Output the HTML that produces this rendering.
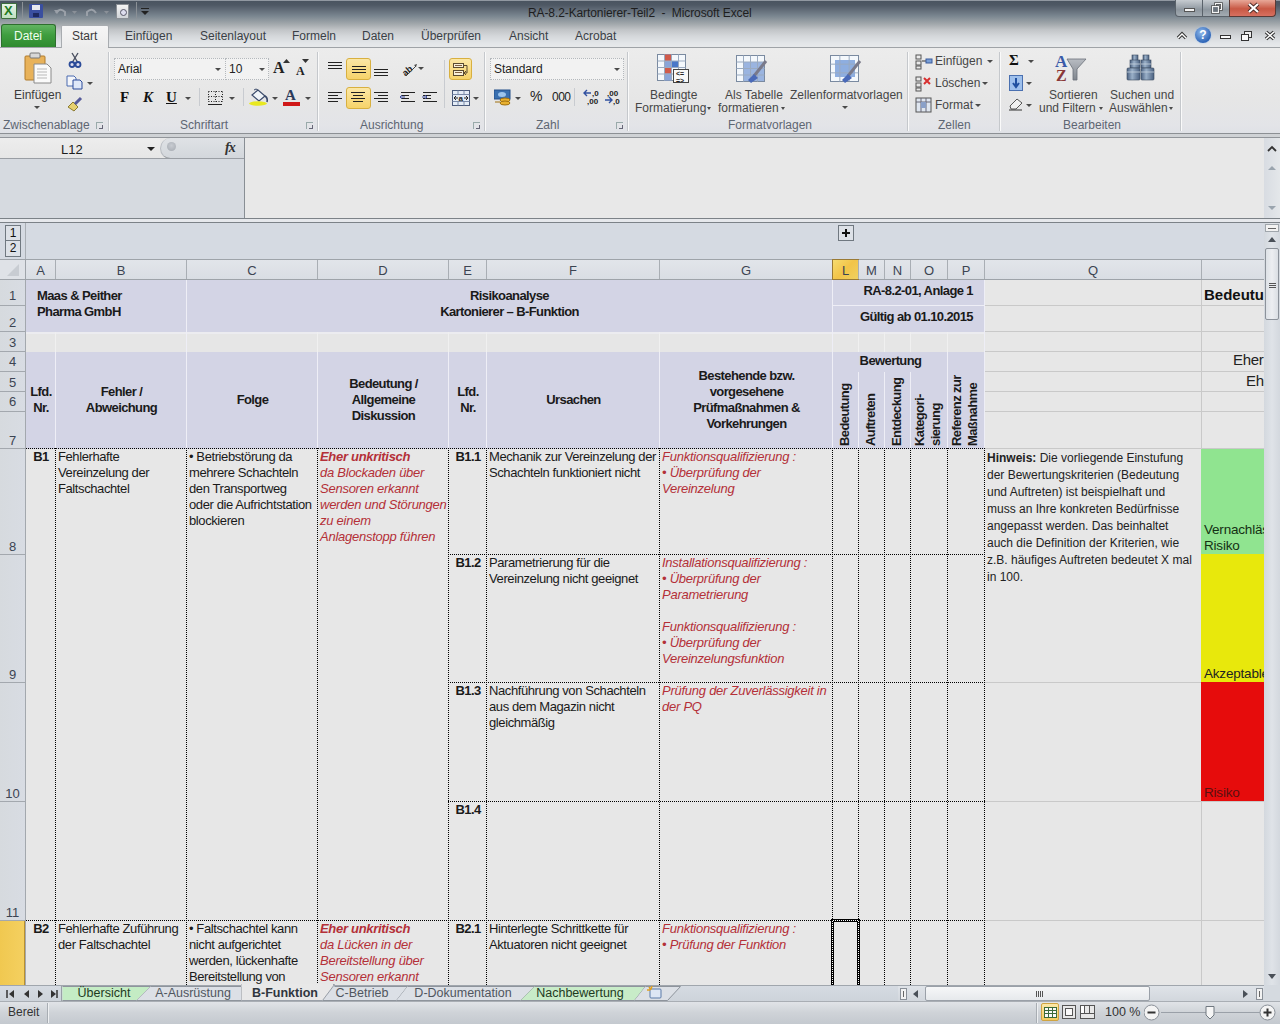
<!DOCTYPE html><html><head><meta charset="utf-8"><style>
*{margin:0;padding:0;box-sizing:border-box}
html,body{width:1280px;height:1024px;overflow:hidden;background:#e8e8e8;font-family:"Liberation Sans",sans-serif}
div{position:absolute}
.t{white-space:nowrap;font-size:12px;line-height:14px;color:#464646}
.ct{font-size:13px;letter-spacing:-0.4px;line-height:16px;color:#1a1a1a;white-space:nowrap}
.b{font-weight:bold}
.red{color:#c0303a;font-style:italic}
.gl{font-size:12px;color:#5f6670}
.sep{width:1px;background:#c4c7cb;box-shadow:1px 0 0 #f8f8f8}
.arr{width:0;height:0;border-left:3px solid transparent;border-right:3px solid transparent;border-top:3px solid #4a4a4a}
</style></head><body>
<div style="left:0px;top:0px;width:1280px;height:48px;background:linear-gradient(to bottom,#d8dce2 0px,#4a5460 1px,#4e5864 5px,#5e6874 9px,#7a8690 16px,#a2a8ac 24px,#c2c5c8 30px,#d4d7da 36px,#e2e5e8 43px,#e6e8ea 46px)"></div>
<div style="left:0px;top:47px;width:1280px;height:1px;background:#9fa3a7"></div>
<div style="left:1px;top:3px;width:16px;height:16px;background:linear-gradient(#e8f4e8,#bfe0bf);border:1px solid #3c6e3c;border-radius:1px"><div style="left:2px;top:0px;font:bold 13px/14px 'Liberation Sans';color:#1f7a1f">X</div></div>
<div style="left:22px;top:2px;width:1px;height:17px;background:#8a9096"></div>
<div style="left:29px;top:4px;width:14px;height:14px;background:#3a4fa0;border-radius:1px"><div style="left:3px;top:1px;width:8px;height:5px;background:#e8eaf0"></div><div style="left:4px;top:9px;width:6px;height:4px;background:#1e2a60"></div></div>
<svg style="position:absolute;left:52px;top:4px" width="90" height="16"><path d="M4 9 q4 -6 9 -1 l0 4" stroke="#9aa0a8" stroke-width="2" fill="none"/><path d="M2 6 l3 4 l3 -4z" fill="#9aa0a8"/><path d="M20 7 l5 0 l-2.5 3z" fill="#8a9098"/><path d="M44 9 q-4 -6 -9 -1 l0 4" stroke="#9aa0a8" stroke-width="2" fill="none"/><path d="M52 7 l5 0 l-2.5 3z" fill="#8a9098"/></svg>
<div style="left:116px;top:4px;width:13px;height:15px;background:linear-gradient(#f4f4f4,#d0d4d8);border:1px solid #8a8f95"><div style="left:3px;top:4px;width:7px;height:7px;border-radius:50%;border:1.5px solid #556;background:#dde"></div></div>
<div style="left:136px;top:2px;width:1px;height:17px;background:#8a9096"></div>
<div style="left:141px;top:8px;width:8px;height:1px;background:#222"></div>
<div style="left:141px;top:11px;width:0;height:0;border-left:4px solid transparent;border-right:4px solid transparent;border-top:4px solid #222"></div>
<div class="t" style="left:528px;top:6px;font-size:12px;color:#1e1e1e;letter-spacing:-0.1px">RA-8.2-Kartonierer-Teil2&nbsp; -&nbsp; Microsoft Excel</div>
<div style="left:1175px;top:0px;width:28px;height:17px;background:linear-gradient(#c6cbd0,#8e979f 60%,#a3abb2);border:1px solid #5a626a;border-top:none;border-radius:0 0 0 4px"><div style="left:8px;top:8px;width:11px;height:4px;background:#f4f4f4;border:1px solid #555"></div></div>
<div style="left:1202px;top:0px;width:28px;height:17px;background:linear-gradient(#c6cbd0,#8e979f 60%,#a3abb2);border:1px solid #5a626a;border-top:none"><svg style="position:absolute;left:8px;top:2px" width="12" height="12"><rect x="4.5" y="1.5" width="6" height="6" fill="none" stroke="#333" stroke-width="2.4"/><rect x="4.5" y="1.5" width="6" height="6" fill="none" stroke="#f4f4f4" stroke-width="1.2"/><rect x="1.5" y="4.5" width="6" height="6" fill="#6a737c" stroke="#333" stroke-width="2.4"/><rect x="1.5" y="4.5" width="6" height="6" fill="#6a737c" stroke="#f4f4f4" stroke-width="1.2"/></svg></div>
<div style="left:1229px;top:0px;width:47px;height:17px;background:linear-gradient(#e8a898,#c85844 55%,#d87060);border:1px solid #5a3a36;border-top:none;border-radius:0 0 4px 0"><svg style="position:absolute;left:17px;top:2px" width="13" height="12"><path d="M2 2 L11 10 M11 2 L2 10" stroke="#4a2a26" stroke-width="4"/><path d="M2 2 L11 10 M11 2 L2 10" stroke="#fff" stroke-width="2.2"/></svg></div>
<div style="left:1px;top:24px;width:55px;height:23px;background:linear-gradient(#62b462,#3f9e3f 45%,#2f8a2f);border:1px solid #2e6e2e;border-bottom:none;border-radius:3px 3px 0 0"></div>
<div class="t" style="left:14px;top:29px;color:#f0fff0;font-size:12px">Datei</div>
<div style="left:61px;top:25px;width:48px;height:23px;background:linear-gradient(#f6f6f6,#ececec);border:1px solid #a8acb0;border-bottom:none;border-radius:2px 2px 0 0"></div>
<div class="t" style="left:72px;top:29px;color:#3b3b3b">Start</div>
<div class="t" style="left:125px;top:29px;color:#3a3f46">Einfügen</div>
<div class="t" style="left:200px;top:29px;color:#3a3f46">Seitenlayout</div>
<div class="t" style="left:292px;top:29px;color:#3a3f46">Formeln</div>
<div class="t" style="left:362px;top:29px;color:#3a3f46">Daten</div>
<div class="t" style="left:421px;top:29px;color:#3a3f46">Überprüfen</div>
<div class="t" style="left:509px;top:29px;color:#3a3f46">Ansicht</div>
<div class="t" style="left:575px;top:29px;color:#3a3f46">Acrobat</div>
<div style="left:108px;top:47px;width:1172px;height:1px;background:#9fa3a7"></div>
<svg style="position:absolute;left:1176px;top:30px" width="12" height="10"><path d="M2 8 L6 4 L10 8" stroke="#333" stroke-width="3.4" fill="none"/><path d="M2 8 L6 4 L10 8" stroke="#fff" stroke-width="1.4" fill="none"/></svg>
<div style="left:1195px;top:27px;width:16px;height:16px;border-radius:50%;background:radial-gradient(circle at 40% 35%,#8fb8ea,#2f66b8 70%);box-shadow:0 0 2px #9cc0f0;color:#fff;font:bold 12px/16px 'Liberation Sans';text-align:center">?</div>
<div style="left:1220px;top:35px;width:11px;height:4px;background:#fafafa;border:1px solid #333"></div>
<div style="left:1244px;top:31px;width:8px;height:7px;border:1px solid #333;background:#eee"></div>
<div style="left:1241px;top:34px;width:8px;height:7px;border:1px solid #333;background:#fafafa"></div>
<svg style="position:absolute;left:1264px;top:30px" width="12" height="11"><path d="M2 2 L10 9 M10 2 L2 9" stroke="#333" stroke-width="3.6"/><path d="M2 2 L10 9 M10 2 L2 9" stroke="#fff" stroke-width="1.6"/></svg>
<div style="left:0px;top:48px;width:1280px;height:86px;background:linear-gradient(#ececec,#e6e6e6 60%,#e3e4e8 90%,#dfe1e6)"></div>
<div style="left:0px;top:133px;width:1280px;height:1px;background:#8c9094"></div>
<div style="left:0px;top:134px;width:1280px;height:3px;background:#cfd2d5"></div>
<div style="left:0px;top:137px;width:1280px;height:1px;background:#91959a"></div>
<div style="left:108px;top:52px;width:1px;height:79px;background:#c5c8cc;box-shadow:1px 0 0 #fafafa"></div>
<div style="left:317px;top:52px;width:1px;height:79px;background:#c5c8cc;box-shadow:1px 0 0 #fafafa"></div>
<div style="left:484px;top:52px;width:1px;height:79px;background:#c5c8cc;box-shadow:1px 0 0 #fafafa"></div>
<div style="left:627px;top:52px;width:1px;height:79px;background:#c5c8cc;box-shadow:1px 0 0 #fafafa"></div>
<div style="left:907px;top:52px;width:1px;height:79px;background:#c5c8cc;box-shadow:1px 0 0 #fafafa"></div>
<div style="left:999px;top:52px;width:1px;height:79px;background:#c5c8cc;box-shadow:1px 0 0 #fafafa"></div>
<div style="left:1180px;top:52px;width:1px;height:79px;background:#c5c8cc;box-shadow:1px 0 0 #fafafa"></div>
<div class="t" style="left:3px;top:118px;color:#5e6672">Zwischenablage</div>
<div class="t" style="left:180px;top:118px;color:#5e6672">Schriftart</div>
<div class="t" style="left:360px;top:118px;color:#5e6672">Ausrichtung</div>
<div class="t" style="left:536px;top:118px;color:#5e6672">Zahl</div>
<div class="t" style="left:728px;top:118px;color:#5e6672">Formatvorlagen</div>
<div class="t" style="left:938px;top:118px;color:#5e6672">Zellen</div>
<div class="t" style="left:1063px;top:118px;color:#5e6672">Bearbeiten</div>
<div style="left:96px;top:122px;width:7px;height:7px;border-left:1px solid #9aa;border-top:1px solid #9aa"><div style="left:2px;top:2px;width:4px;height:4px;border-right:1px solid #667;border-bottom:1px solid #667"></div></div>
<div style="left:306px;top:122px;width:7px;height:7px;border-left:1px solid #9aa;border-top:1px solid #9aa"><div style="left:2px;top:2px;width:4px;height:4px;border-right:1px solid #667;border-bottom:1px solid #667"></div></div>
<div style="left:473px;top:122px;width:7px;height:7px;border-left:1px solid #9aa;border-top:1px solid #9aa"><div style="left:2px;top:2px;width:4px;height:4px;border-right:1px solid #667;border-bottom:1px solid #667"></div></div>
<div style="left:616px;top:122px;width:7px;height:7px;border-left:1px solid #9aa;border-top:1px solid #9aa"><div style="left:2px;top:2px;width:4px;height:4px;border-right:1px solid #667;border-bottom:1px solid #667"></div></div>
<svg style="position:absolute;left:24px;top:52px" width="30" height="32">
<rect x="1" y="4" width="20" height="24" rx="1" fill="#e8b25a" stroke="#b07a2a"/>
<rect x="6" y="1" width="10" height="5" rx="1" fill="#d8d8d8" stroke="#777"/>
<path d="M10 12 h13 l4 4 v15 h-17z" fill="#fafafa" stroke="#8a8a8a"/>
<path d="M13 17 h10 M13 20 h10 M13 23 h10 M13 26 h10" stroke="#b8b8b8"/>
</svg>
<div class="t" style="left:14px;top:88px;color:#3b3b3b">Einfügen</div>
<div class="arr" style="left:34px;top:106px"></div>
<svg style="position:absolute;left:68px;top:52px" width="14" height="16"><path d="M4 1 L9.5 10 M10 1 L4.5 10" stroke="#4a5060" stroke-width="1.4"/><circle cx="4" cy="12.5" r="2.5" fill="#dde" stroke="#2a4a98" stroke-width="1.8"/><circle cx="10" cy="12.5" r="2.5" fill="#dde" stroke="#2a4a98" stroke-width="1.8"/></svg>
<svg style="position:absolute;left:66px;top:75px" width="18" height="15"><path d="M1 1 h7 l2 2 v8 h-9z" fill="#f4f6fa" stroke="#4a6ab0"/><path d="M7 5 h7 l2 2 v7 h-9z" fill="#dfe8f8" stroke="#2a4a9a"/></svg>
<div class="arr" style="left:87px;top:82px"></div>
<svg style="position:absolute;left:66px;top:96px" width="18" height="17"><path d="M2 11 l5 -5 l5 5 l-4 4z" fill="#e6d070" stroke="#8a7a30"/><path d="M9 8 l6 -6" stroke="#555a9a" stroke-width="3"/></svg>
<div style="left:114px;top:58px;width:112px;height:22px;background:#f2f2f2;border:1px dotted #b4b8bc"></div>
<div class="t" style="left:118px;top:62px;color:#222">Arial</div>
<div class="arr" style="left:215px;top:68px"></div>
<div style="left:225px;top:58px;width:44px;height:22px;background:#f2f2f2;border:1px dotted #b4b8bc"></div>
<div class="t" style="left:229px;top:62px;color:#222">10</div>
<div class="arr" style="left:259px;top:68px"></div>
<div class="t" style="left:273px;top:59px;font:bold 16px/18px 'Liberation Serif';color:#222">A</div>
<svg style="position:absolute;left:283px;top:59px" width="8" height="5"><path d="M0 4 L3.5 0 L7 4z" fill="#333"/></svg>
<div class="t" style="left:296px;top:64px;font:bold 12px/14px 'Liberation Serif';color:#222">A</div>
<svg style="position:absolute;left:302px;top:59px" width="8" height="5"><path d="M0 0 L3.5 4 L7 0z" fill="#333"/></svg>
<div class="t" style="left:120px;top:89px;font:bold 15px/16px 'Liberation Serif';color:#111">F</div>
<div class="t" style="left:143px;top:89px;font:bold italic 15px/16px 'Liberation Serif';color:#111">K</div>
<div class="t" style="left:166px;top:89px;font:bold 15px/16px 'Liberation Serif';color:#111;text-decoration:underline">U</div>
<div class="arr" style="left:185px;top:97px"></div>
<div style="left:199px;top:88px;width:1px;height:18px;background:#c8cbd0"></div>
<svg style="position:absolute;left:208px;top:91px" width="15" height="15"><path d="M0.5 0.5 H14.5 M0.5 5.5 H14.5 M0.5 10.5 H14.5 M0.5 0.5 V11 M7.5 0.5 V11 M14.5 0.5 V11" stroke="#222" stroke-dasharray="1 1.5" fill="none"/></svg>
<div style="left:208px;top:104px;width:14px;height:1px;background:#222"></div>
<div class="arr" style="left:229px;top:97px"></div>
<div style="left:243px;top:88px;width:1px;height:18px;background:#c8cbd0"></div>
<svg style="position:absolute;left:248px;top:88px" width="22" height="18"><path d="M4 7 L10 2 L17 8 L11 13z" fill="#f0f4f8" stroke="#3a4a6a" stroke-width="1.2"/><path d="M10 2 q-2 -2 -4 0" stroke="#3a4a6a" fill="none"/><path d="M17 8 q3 2 2 6" stroke="#3a4a6a" stroke-width="1.6" fill="none"/><ellipse cx="10" cy="15.5" rx="9" ry="2.2" fill="#e8e820"/></svg>
<div class="arr" style="left:272px;top:97px"></div>
<div class="t" style="left:285px;top:87px;font:bold 15px/16px 'Liberation Serif';color:#2a3a5a">A</div>
<div style="left:283px;top:102px;width:17px;height:4px;background:#d01818"></div>
<div class="arr" style="left:305px;top:97px"></div>
<div style="left:328px;top:62px;width:14px;height:1px;background:#222"></div>
<div style="left:328px;top:65px;width:14px;height:1px;background:#222"></div>
<div style="left:328px;top:68px;width:14px;height:1px;background:#222"></div>
<div style="left:346px;top:58px;width:25px;height:22px;background:linear-gradient(#fbe7a6,#f6d36a);border:1px solid #d8b040;border-radius:3px"></div>
<div style="left:352px;top:66px;width:14px;height:1px;background:#222"></div>
<div style="left:352px;top:69px;width:14px;height:1px;background:#222"></div>
<div style="left:352px;top:72px;width:14px;height:1px;background:#222"></div>
<div style="left:374px;top:69px;width:14px;height:1px;background:#222"></div>
<div style="left:374px;top:72px;width:14px;height:1px;background:#222"></div>
<div style="left:374px;top:75px;width:14px;height:1px;background:#222"></div>
<svg style="position:absolute;left:400px;top:61px" width="22" height="16"><text x="1" y="12" transform="rotate(-40 8 8)" font-family="Liberation Sans" font-weight="bold" font-size="9" fill="#222">ab</text><path d="M6 15 L16 5" stroke="#444"/><path d="M14 4 l3 -1 l-1 3z" fill="#444"/></svg>
<div class="arr" style="left:418px;top:67px"></div>
<div style="left:328px;top:92px;width:14px;height:1px;background:#222"></div>
<div style="left:328px;top:95px;width:10px;height:1px;background:#222"></div>
<div style="left:328px;top:98px;width:14px;height:1px;background:#222"></div>
<div style="left:328px;top:101px;width:10px;height:1px;background:#222"></div>
<div style="left:346px;top:87px;width:25px;height:22px;background:linear-gradient(#fbe7a6,#f6d36a);border:1px solid #d8b040;border-radius:3px"></div>
<div style="left:351px;top:92px;width:14px;height:1px;background:#222"></div>
<div style="left:353px;top:95px;width:10px;height:1px;background:#222"></div>
<div style="left:351px;top:98px;width:14px;height:1px;background:#222"></div>
<div style="left:353px;top:101px;width:10px;height:1px;background:#222"></div>
<div style="left:374px;top:92px;width:14px;height:1px;background:#222"></div>
<div style="left:378px;top:95px;width:10px;height:1px;background:#222"></div>
<div style="left:374px;top:98px;width:14px;height:1px;background:#222"></div>
<div style="left:378px;top:101px;width:10px;height:1px;background:#222"></div>
<div style="left:401px;top:92px;width:14px;height:1px;background:#222"></div>
<div style="left:401px;top:95px;width:8px;height:1px;background:#222"></div>
<div style="left:401px;top:98px;width:8px;height:1px;background:#222"></div>
<div style="left:401px;top:101px;width:14px;height:1px;background:#222"></div>
<svg style="position:absolute;left:399px;top:93px" width="8" height="8"><path d="M6 4 H1 M3 2 L1 4 L3 6" stroke="#4050a0" fill="none"/></svg>
<div style="left:423px;top:92px;width:14px;height:1px;background:#222"></div>
<div style="left:423px;top:95px;width:8px;height:1px;background:#222"></div>
<div style="left:423px;top:98px;width:8px;height:1px;background:#222"></div>
<div style="left:423px;top:101px;width:14px;height:1px;background:#222"></div>
<svg style="position:absolute;left:421px;top:93px" width="8" height="8"><path d="M1 4 H6 M4 2 L6 4 L4 6" stroke="#4050a0" fill="none"/></svg>
<div style="left:444px;top:60px;width:1px;height:48px;background:#c8cbd0"></div>
<div style="left:449px;top:58px;width:23px;height:22px;background:linear-gradient(#fbe7a6,#f6d36a);border:1px solid #d8b040;border-radius:3px"><svg style="position:absolute;left:2px;top:2px" width="18" height="17"><rect x="1.5" y="2.5" width="10" height="4" fill="#f8f0d8" stroke="#5a4a30"/><rect x="1.5" y="9.5" width="10" height="5" fill="#f8f0d8" stroke="#5a4a30"/><path d="M3 4.5 H10 M3 11.5 H10" stroke="#806040"/><path d="M12 4.5 H15 V12 H13" stroke="#5a4a30" fill="none"/><path d="M14 10 L12 12 L14 14" stroke="#5a4a30" fill="none"/></svg></div>
<svg style="position:absolute;left:452px;top:90px" width="18" height="16"><rect x="0.5" y="0.5" width="17" height="15" fill="#e4ecf6" stroke="#4a5a7a"/><path d="M0.5 4.5 H17.5 M0.5 11.5 H17.5 M6 0.5 V4.5 M12 0.5 V4.5 M6 11.5 V15.5 M12 11.5 V15.5" stroke="#7a8aa8"/><path d="M2 8 H6 M16 8 H12 M4 6 L2 8 L4 10 M14 6 L16 8 L14 10" stroke="#222" fill="none"/><text x="6.5" y="10.5" font-family="Liberation Sans" font-weight="bold" font-size="8" fill="#222">a</text></svg>
<div class="arr" style="left:473px;top:97px"></div>
<div style="left:490px;top:58px;width:134px;height:22px;background:#f2f2f2;border:1px dotted #b4b8bc"></div>
<div class="t" style="left:494px;top:62px;color:#222">Standard</div>
<div class="arr" style="left:614px;top:68px"></div>
<svg style="position:absolute;left:494px;top:89px" width="18" height="18"><rect x="0" y="1" width="16" height="9" fill="#3a70b0" stroke="#24508a"/><ellipse cx="8" cy="5.5" rx="4" ry="2.5" fill="#9cc4ec"/><ellipse cx="11" cy="11" rx="5" ry="2" fill="#e8b030" stroke="#a07010"/><ellipse cx="11" cy="14" rx="5" ry="2" fill="#e8b030" stroke="#a07010"/><path d="M1 13 h5" stroke="#a07010"/></svg>
<div class="arr" style="left:515px;top:97px"></div>
<div class="t" style="left:530px;top:89px;font-size:14px;color:#222">%</div>
<div class="t" style="left:552px;top:90px;font-size:12px;color:#222;letter-spacing:-0.5px">000</div>
<div style="left:574px;top:88px;width:1px;height:18px;background:#c8cbd0"></div>
<svg style="position:absolute;left:582px;top:88px" width="20" height="18"><path d="M9 5 H2 M5 2 L2 5 L5 8" stroke="#3050a0" stroke-width="1.4" fill="none"/><text x="10" y="8" font-family="Liberation Sans" font-size="8" font-weight="bold" fill="#222">,0</text><text x="5" y="16" font-family="Liberation Sans" font-size="8" font-weight="bold" fill="#222">,00</text></svg>
<svg style="position:absolute;left:604px;top:88px" width="20" height="18"><text x="3" y="8" font-family="Liberation Sans" font-size="8" font-weight="bold" fill="#222">,00</text><path d="M1 12 H8 M5 9 L8 12 L5 15" stroke="#3050a0" stroke-width="1.4" fill="none"/><text x="9" y="16" font-family="Liberation Sans" font-size="8" font-weight="bold" fill="#222">,0</text></svg>
<svg style="position:absolute;left:657px;top:54px" width="30" height="28"><rect x="0.5" y="0.5" width="28" height="26" fill="#f4f8fc" stroke="#7a8aa0"/><rect x="7" y="0.5" width="7" height="26" fill="#8aa4d8"/><rect x="7" y="0.5" width="7" height="6.5" fill="#d05a4a"/><rect x="7" y="13" width="7" height="6.5" fill="#d05a4a"/><rect x="14" y="7" width="7" height="6.5" fill="#4a78c8"/><path d="M7.5 0.5 V26.5" stroke="#9aaac0"/><path d="M14.5 0.5 V26.5" stroke="#9aaac0"/><path d="M21.5 0.5 V26.5" stroke="#9aaac0"/><path d="M0.5 7.0 H28.5" stroke="#9aaac0"/><path d="M0.5 13.5 H28.5" stroke="#9aaac0"/><path d="M0.5 20.0 H28.5" stroke="#9aaac0"/></svg>
<div style="left:673px;top:69px;width:16px;height:14px;background:#f8f8f8;border:1px solid #444"><div style="left:2px;top:0px;font:bold 7px/7px 'Liberation Sans';color:#222">&lt;=<br>=&gt;</div></div>
<svg style="position:absolute;left:736px;top:55px" width="30" height="28"><rect x="0.5" y="0.5" width="28" height="26" fill="#f4f8fc" stroke="#7a8aa0"/><rect x="7" y="7" width="21" height="19" fill="#9ab4e0"/><path d="M7.5 0.5 V26.5" stroke="#9aaac0"/><path d="M14.5 0.5 V26.5" stroke="#9aaac0"/><path d="M21.5 0.5 V26.5" stroke="#9aaac0"/><path d="M0.5 7.0 H28.5" stroke="#9aaac0"/><path d="M0.5 13.5 H28.5" stroke="#9aaac0"/><path d="M0.5 20.0 H28.5" stroke="#9aaac0"/></svg>
<svg style="position:absolute;left:746px;top:60px" width="22" height="24"><path d="M20 1 L8 16" stroke="#7a7a8a" stroke-width="3"/><path d="M8 14 l4 4 l-7 5 l-3 -3z" fill="#4a6ab8"/></svg>
<svg style="position:absolute;left:830px;top:55px" width="30" height="28"><rect x="0.5" y="0.5" width="28" height="26" fill="#f4f8fc" stroke="#7a8aa0"/><rect x="5" y="5" width="20" height="17" fill="#8eaee0"/><path d="M9.833333333333334 0.5 V26.5" stroke="#9aaac0"/><path d="M19.166666666666668 0.5 V26.5" stroke="#9aaac0"/><path d="M0.5 9.166666666666666 H28.5" stroke="#9aaac0"/><path d="M0.5 17.833333333333332 H28.5" stroke="#9aaac0"/></svg>
<svg style="position:absolute;left:840px;top:60px" width="22" height="24"><path d="M20 1 L8 16" stroke="#7a7a8a" stroke-width="3"/><path d="M8 14 l4 4 l-7 5 l-3 -3z" fill="#4a6ab8"/></svg>
<div class="t" style="left:650px;top:88px;">Bedingte</div>
<div class="t" style="left:635px;top:101px;">Formatierung</div>
<div class="arr" style="left:707px;top:107px;border-width:3px 2.5px 0"></div>
<div class="t" style="left:725px;top:88px;">Als Tabelle</div>
<div class="t" style="left:718px;top:101px;">formatieren</div>
<div class="arr" style="left:781px;top:107px;border-width:3px 2.5px 0"></div>
<div class="t" style="left:790px;top:88px;">Zellenformatvorlagen</div>
<div class="arr" style="left:842px;top:106px"></div>
<svg style="position:absolute;left:915px;top:54px" width="18" height="60">
<rect x="1" y="1" width="5" height="4" fill="none" stroke="#555"/><rect x="1" y="7" width="5" height="4" fill="none" stroke="#555"/><rect x="1" y="12" width="5" height="3" fill="none" stroke="#555"/>
<path d="M7 7 H11" stroke="#333"/><rect x="11" y="5" width="6" height="4" fill="#7aa0d8" stroke="#3a5a9a"/>
<rect x="1" y="23" width="5" height="4" fill="none" stroke="#555"/><rect x="1" y="29" width="5" height="4" fill="none" stroke="#555"/><rect x="1" y="34" width="5" height="3" fill="none" stroke="#555"/>
<path d="M9 24 L15 30 M15 24 L9 30" stroke="#d83030" stroke-width="2"/>
<rect x="1" y="44" width="15" height="14" fill="#dfe6f0" stroke="#555"/><path d="M1 48 H16 M6 44 V58 M11 44 V58" stroke="#667"/><rect x="6" y="48" width="5" height="6" fill="#8aa0c8"/>
</svg>
<div class="t" style="left:935px;top:54px;">Einfügen</div>
<div class="arr" style="left:987px;top:60px"></div>
<div class="t" style="left:935px;top:76px;">Löschen</div>
<div class="arr" style="left:982px;top:82px"></div>
<div class="t" style="left:935px;top:98px;">Format</div>
<div class="arr" style="left:975px;top:104px"></div>
<div class="t" style="left:1009px;top:52px;font:bold 15px/16px 'Liberation Serif';color:#111">Σ</div>
<div class="arr" style="left:1028px;top:60px"></div>
<svg style="position:absolute;left:1009px;top:75px" width="14" height="16"><rect x="0.5" y="0.5" width="13" height="15" fill="#9ec0ec" stroke="#4a70b0"/><path d="M7 3 V11 M4 8 L7 12 L10 8" stroke="#2050a0" stroke-width="2" fill="none"/></svg>
<div class="arr" style="left:1026px;top:82px"></div>
<svg style="position:absolute;left:1008px;top:97px" width="16" height="14"><path d="M2 9 L9 2 L14 6 L8 12 H3z" fill="#f0f0f0" stroke="#555"/><path d="M1 13 H14" stroke="#333"/></svg>
<div class="arr" style="left:1026px;top:104px"></div>
<svg style="position:absolute;left:1055px;top:52px" width="34" height="32"><defs><linearGradient id="fg" x1="0" x2="0" y1="0" y2="1"><stop offset="0" stop-color="#b8bcc2"/><stop offset="1" stop-color="#80868e"/></linearGradient></defs><path d="M12 7 H31 L22 17 V28 H18 V17z" fill="url(#fg)" stroke="#6a7078" stroke-width="0.8"/><text x="0" y="15" font-family="Liberation Serif" font-weight="bold" font-size="17" fill="#3a5aa8">A</text><text x="1" y="29" font-family="Liberation Serif" font-weight="bold" font-size="16" fill="#8a3838">Z</text></svg>
<div class="t" style="left:1049px;top:88px;">Sortieren</div>
<div class="t" style="left:1039px;top:101px;">und Filtern</div>
<div class="arr" style="left:1099px;top:107px;border-width:3px 2.5px 0"></div>
<svg style="position:absolute;left:1126px;top:54px" width="30" height="28"><defs><linearGradient id="bg1" x1="0" x2="1" y1="0" y2="0"><stop offset="0" stop-color="#4a6080"/><stop offset="0.4" stop-color="#9ab0c8"/><stop offset="1" stop-color="#4a6080"/></linearGradient></defs>
<rect x="6" y="1" width="6" height="6" fill="url(#bg1)" stroke="#3a4a60" stroke-width="0.6"/><rect x="17" y="1" width="6" height="6" fill="url(#bg1)" stroke="#3a4a60" stroke-width="0.6"/>
<rect x="4" y="6" width="10" height="8" fill="url(#bg1)" stroke="#3a4a60" stroke-width="0.6"/><rect x="15" y="6" width="10" height="8" fill="url(#bg1)" stroke="#3a4a60" stroke-width="0.6"/>
<rect x="1" y="14" width="13" height="12" rx="1" fill="url(#bg1)" stroke="#3a4a60" stroke-width="0.6"/><rect x="15" y="14" width="13" height="12" rx="1" fill="url(#bg1)" stroke="#3a4a60" stroke-width="0.6"/>
<path d="M1 18 H14 M15 18 H28 M4 10 H14 M15 10 H25" stroke="#c8d4e0" stroke-width="0.8"/></svg>
<div class="t" style="left:1110px;top:88px;">Suchen und</div>
<div class="t" style="left:1109px;top:101px;">Auswählen</div>
<div class="arr" style="left:1169px;top:107px;border-width:3px 2.5px 0"></div>
<div style="left:0px;top:138px;width:1264px;height:80px;background:#e8e8e8"></div>
<div style="left:0px;top:138px;width:160px;height:21px;background:linear-gradient(#ededed,#e6e6e6);border-bottom:1px solid #a0a4a8"></div>
<div class="t" style="left:61px;top:142px;font-size:13px;line-height:15px;color:#1e1e1e">L12</div>
<div style="left:147px;top:147px;width:0;height:0;border-left:4px solid transparent;border-right:4px solid transparent;border-top:4px solid #222"></div>
<div style="left:160px;top:138px;width:85px;height:21px;background:linear-gradient(#dfe2e6,#d3d7dc);border-radius:11px 0 0 11px;border-left:1px solid #b8bcc2;border-bottom:1px solid #a0a4a8"><div style="left:6px;top:4px;width:9px;height:9px;border-radius:50%;background:radial-gradient(circle at 50% 40%,#c8ccd2,#a4a9b0)"></div></div>
<div style="left:0px;top:158px;width:245px;height:1px;background:#9a9ea4"></div>
<div class="t" style="left:225px;top:140px;font:bold italic 14px/16px 'Liberation Serif';color:#333;letter-spacing:-1px">fx</div>
<div style="left:0px;top:159px;width:245px;height:59px;background:#d6dae0"></div>
<div style="left:244px;top:138px;width:1px;height:80px;background:#888e94"></div>
<div style="left:0px;top:218px;width:1280px;height:1px;background:#7c8288"></div>
<div style="left:0px;top:219px;width:1280px;height:3px;background:#e6e8ec"></div>
<div style="left:0px;top:222px;width:1280px;height:1px;background:#7c8288"></div>
<div style="left:1264px;top:138px;width:16px;height:80px;background:linear-gradient(90deg,#d8dce2,#e4e7ea)"></div>
<svg style="position:absolute;left:1266px;top:142px" width="12" height="76"><path d="M2 9 L6 5 L10 9" stroke="#333" stroke-width="1.8" fill="none"/><path d="M2 28 L6 24 L10 28z" fill="#9aa4ae"/><path d="M2 64 L6 68 L10 64z" fill="#9aa4ae"/></svg>
<div style="left:0px;top:223px;width:1264px;height:37px;background:#d5dae2"></div>
<div style="left:25px;top:223px;width:1px;height:37px;background:#a9aeb4"></div>
<div style="left:5px;top:225px;width:16px;height:16px;border:1px solid #707880;background:#dde1e7;font-size:12px;line-height:14px;text-align:center;color:#111">1</div>
<div style="left:5px;top:240px;width:16px;height:17px;border:1px solid #707880;background:#dde1e7;font-size:12px;line-height:15px;text-align:center;color:#111">2</div>
<div style="left:838px;top:225px;width:16px;height:16px;border:1px solid #707880;background:#dde1e7"><div style="left:3px;top:6px;width:8px;height:2px;background:#111"></div><div style="left:6px;top:3px;width:2px;height:8px;background:#111"></div></div>
<div style="left:0px;top:259px;width:1264px;height:1px;background:#9ea3a9"></div>
<div style="left:0px;top:260px;width:1264px;height:20px;background:linear-gradient(#e2e5ea,#d9dde3)"></div>
<div style="left:0px;top:279px;width:1264px;height:1px;background:#9ea3a9"></div>
<div style="left:0px;top:260px;width:25px;height:19px;background:#dfe2e7"><svg style="position:absolute;left:5px;top:3px" width="15" height="14"><path d="M14 1 L14 13 L2 13z" fill="#c8ccd2"/></svg></div>
<div style="left:25px;top:260px;width:1px;height:20px;background:#9ea3a9"></div>
<div style="left:55px;top:260px;width:1px;height:19px;background:#a9aeb4"></div>
<div class="t" style="left:26px;top:263px;width:29px;text-align:center;font-size:13px;line-height:15px;color:#3c4452">A</div>
<div style="left:186px;top:260px;width:1px;height:19px;background:#a9aeb4"></div>
<div class="t" style="left:56px;top:263px;width:130px;text-align:center;font-size:13px;line-height:15px;color:#3c4452">B</div>
<div style="left:317px;top:260px;width:1px;height:19px;background:#a9aeb4"></div>
<div class="t" style="left:187px;top:263px;width:130px;text-align:center;font-size:13px;line-height:15px;color:#3c4452">C</div>
<div style="left:448px;top:260px;width:1px;height:19px;background:#a9aeb4"></div>
<div class="t" style="left:318px;top:263px;width:130px;text-align:center;font-size:13px;line-height:15px;color:#3c4452">D</div>
<div style="left:486px;top:260px;width:1px;height:19px;background:#a9aeb4"></div>
<div class="t" style="left:449px;top:263px;width:37px;text-align:center;font-size:13px;line-height:15px;color:#3c4452">E</div>
<div style="left:659px;top:260px;width:1px;height:19px;background:#a9aeb4"></div>
<div class="t" style="left:487px;top:263px;width:172px;text-align:center;font-size:13px;line-height:15px;color:#3c4452">F</div>
<div style="left:832px;top:260px;width:1px;height:19px;background:#a9aeb4"></div>
<div class="t" style="left:660px;top:263px;width:172px;text-align:center;font-size:13px;line-height:15px;color:#3c4452">G</div>
<div style="left:832px;top:259px;width:27px;height:21px;background:linear-gradient(135deg,#f6dc70,#f2c448 50%,#f0d060);border:1px solid #9a7a34"></div>
<div style="left:858px;top:260px;width:1px;height:19px;background:#a9aeb4"></div>
<div class="t" style="left:833px;top:263px;width:25px;text-align:center;font-size:13px;line-height:15px;color:#3c4452">L</div>
<div style="left:884px;top:260px;width:1px;height:19px;background:#a9aeb4"></div>
<div class="t" style="left:859px;top:263px;width:25px;text-align:center;font-size:13px;line-height:15px;color:#3c4452">M</div>
<div style="left:910px;top:260px;width:1px;height:19px;background:#a9aeb4"></div>
<div class="t" style="left:885px;top:263px;width:25px;text-align:center;font-size:13px;line-height:15px;color:#3c4452">N</div>
<div style="left:947px;top:260px;width:1px;height:19px;background:#a9aeb4"></div>
<div class="t" style="left:911px;top:263px;width:36px;text-align:center;font-size:13px;line-height:15px;color:#3c4452">O</div>
<div style="left:984px;top:260px;width:1px;height:19px;background:#a9aeb4"></div>
<div class="t" style="left:948px;top:263px;width:36px;text-align:center;font-size:13px;line-height:15px;color:#3c4452">P</div>
<div style="left:1201px;top:260px;width:1px;height:19px;background:#a9aeb4"></div>
<div class="t" style="left:985px;top:263px;width:216px;text-align:center;font-size:13px;line-height:15px;color:#3c4452">Q</div>
<div style="left:1264px;top:260px;width:1px;height:19px;background:#a9aeb4"></div>
<div style="left:0px;top:280px;width:25px;height:705px;background:linear-gradient(90deg,#d6dade,#d8dce3)"></div>
<div style="left:25px;top:280px;width:1px;height:705px;background:#a3a8ae"></div>
<div style="left:0px;top:305px;width:25px;height:1px;background:#a3a8ae"></div>
<div class="t" style="left:0px;top:288px;width:25px;text-align:center;font-size:13px;line-height:15px;color:#3c4452">1</div>
<div style="left:0px;top:331px;width:25px;height:1px;background:#a3a8ae"></div>
<div class="t" style="left:0px;top:315px;width:25px;text-align:center;font-size:13px;line-height:15px;color:#3c4452">2</div>
<div style="left:0px;top:351px;width:25px;height:1px;background:#a3a8ae"></div>
<div class="t" style="left:0px;top:335px;width:25px;text-align:center;font-size:13px;line-height:15px;color:#3c4452">3</div>
<div style="left:0px;top:371px;width:25px;height:1px;background:#a3a8ae"></div>
<div class="t" style="left:0px;top:354px;width:25px;text-align:center;font-size:13px;line-height:15px;color:#3c4452">4</div>
<div style="left:0px;top:391px;width:25px;height:1px;background:#a3a8ae"></div>
<div class="t" style="left:0px;top:375px;width:25px;text-align:center;font-size:13px;line-height:15px;color:#3c4452">5</div>
<div style="left:0px;top:411px;width:25px;height:1px;background:#a3a8ae"></div>
<div class="t" style="left:0px;top:394px;width:25px;text-align:center;font-size:13px;line-height:15px;color:#3c4452">6</div>
<div style="left:0px;top:448px;width:25px;height:1px;background:#a3a8ae"></div>
<div class="t" style="left:0px;top:433px;width:25px;text-align:center;font-size:13px;line-height:15px;color:#3c4452">7</div>
<div style="left:0px;top:554px;width:25px;height:1px;background:#a3a8ae"></div>
<div class="t" style="left:0px;top:539px;width:25px;text-align:center;font-size:13px;line-height:15px;color:#3c4452">8</div>
<div style="left:0px;top:682px;width:25px;height:1px;background:#a3a8ae"></div>
<div class="t" style="left:0px;top:667px;width:25px;text-align:center;font-size:13px;line-height:15px;color:#3c4452">9</div>
<div style="left:0px;top:801px;width:25px;height:1px;background:#a3a8ae"></div>
<div class="t" style="left:0px;top:786px;width:25px;text-align:center;font-size:13px;line-height:15px;color:#3c4452">10</div>
<div style="left:0px;top:920px;width:25px;height:1px;background:#a3a8ae"></div>
<div class="t" style="left:0px;top:905px;width:25px;text-align:center;font-size:13px;line-height:15px;color:#3c4452">11</div>
<div style="left:0px;top:921px;width:25px;height:64px;background:linear-gradient(90deg,#f0c850,#f4d060);border-right:1px solid #b89030"></div>
<div style="left:26px;top:280px;width:1238px;height:705px;overflow:hidden;background:#e7e7e7">
<div style="left:959px;top:25px;width:279px;height:1px;background:#c9c9c9"></div>
<div style="left:959px;top:51px;width:279px;height:1px;background:#c9c9c9"></div>
<div style="left:959px;top:71px;width:279px;height:1px;background:#c9c9c9"></div>
<div style="left:959px;top:91px;width:279px;height:1px;background:#c9c9c9"></div>
<div style="left:959px;top:111px;width:279px;height:1px;background:#c9c9c9"></div>
<div style="left:959px;top:131px;width:279px;height:1px;background:#c9c9c9"></div>
<div style="left:959px;top:168px;width:279px;height:1px;background:#c9c9c9"></div>
<div style="left:959px;top:402px;width:279px;height:1px;background:#c9c9c9"></div>
<div style="left:959px;top:521px;width:279px;height:1px;background:#c9c9c9"></div>
<div style="left:959px;top:640px;width:279px;height:1px;background:#c9c9c9"></div>
<div style="left:1175px;top:0px;width:1px;height:705px;background:#c9c9c9"></div>
<div style="left:0px;top:0px;width:959px;height:52px;background:#d3d4e5"></div>
<div style="left:0px;top:52px;width:959px;height:20px;background:#e6e6e6;border-top:2px solid #ececf0"></div>
<div style="left:0px;top:72px;width:959px;height:97px;background:#d3d4e5"></div>
<div style="left:160px;top:0px;width:1px;height:168px;background:#eeeef6"></div>
<div style="left:806px;top:0px;width:1px;height:168px;background:#eeeef6"></div>
<div style="left:958px;top:0px;width:1px;height:168px;background:#eeeef6"></div>
<div style="left:29px;top:52px;width:1px;height:20px;background:#f0f0f0"></div>
<div style="left:291px;top:52px;width:1px;height:20px;background:#f0f0f0"></div>
<div style="left:422px;top:52px;width:1px;height:20px;background:#f0f0f0"></div>
<div style="left:460px;top:52px;width:1px;height:20px;background:#f0f0f0"></div>
<div style="left:633px;top:52px;width:1px;height:20px;background:#f0f0f0"></div>
<div style="left:832px;top:52px;width:1px;height:20px;background:#f0f0f0"></div>
<div style="left:858px;top:52px;width:1px;height:20px;background:#f0f0f0"></div>
<div style="left:884px;top:52px;width:1px;height:20px;background:#f0f0f0"></div>
<div style="left:921px;top:52px;width:1px;height:20px;background:#f0f0f0"></div>
<div style="left:29px;top:72px;width:1px;height:96px;background:#eeeef6"></div>
<div style="left:291px;top:72px;width:1px;height:96px;background:#eeeef6"></div>
<div style="left:422px;top:72px;width:1px;height:96px;background:#eeeef6"></div>
<div style="left:460px;top:72px;width:1px;height:96px;background:#eeeef6"></div>
<div style="left:633px;top:72px;width:1px;height:96px;background:#eeeef6"></div>
<div style="left:921px;top:72px;width:1px;height:96px;background:#eeeef6"></div>
<div style="left:832px;top:92px;width:1px;height:76px;background:#eeeef6"></div>
<div style="left:858px;top:92px;width:1px;height:76px;background:#eeeef6"></div>
<div style="left:884px;top:92px;width:1px;height:76px;background:#eeeef6"></div>
<div style="left:807px;top:25px;width:151px;height:1px;background:#eeeef6"></div>
<div class="ct" style="left:11px;top:8px;font-weight:bold;letter-spacing:-0.6px;color:#1a1a1a">Maas &amp; Peither<br>Pharma GmbH</div>
<div class="ct" style="left:161px;top:8px;font-weight:bold;letter-spacing:-0.6px;color:#1a1a1a;width:645px;text-align:center">Risikoanalyse<br>Kartonierer – B-Funktion</div>
<div class="ct" style="left:807px;top:3px;font-weight:bold;letter-spacing:-0.6px;color:#1a1a1a;width:140px;text-align:right">RA-8.2-01, Anlage 1</div>
<div class="ct" style="left:807px;top:29px;font-weight:bold;letter-spacing:-0.6px;color:#1a1a1a;width:140px;text-align:right">Gültig ab 01.10.2015</div>
<div class="ct" style="left:0px;top:104px;font-weight:bold;letter-spacing:-0.6px;color:#1a1a1a;width:30px;text-align:center">Lfd.<br>Nr.</div>
<div class="ct" style="left:30px;top:104px;font-weight:bold;letter-spacing:-0.6px;color:#1a1a1a;width:131px;text-align:center">Fehler /<br>Abweichung</div>
<div class="ct" style="left:161px;top:112px;font-weight:bold;letter-spacing:-0.6px;color:#1a1a1a;width:131px;text-align:center">Folge</div>
<div class="ct" style="left:292px;top:96px;font-weight:bold;letter-spacing:-0.6px;color:#1a1a1a;width:131px;text-align:center">Bedeutung /<br>Allgemeine<br>Diskussion</div>
<div class="ct" style="left:423px;top:104px;font-weight:bold;letter-spacing:-0.6px;color:#1a1a1a;width:38px;text-align:center">Lfd.<br>Nr.</div>
<div class="ct" style="left:461px;top:112px;font-weight:bold;letter-spacing:-0.6px;color:#1a1a1a;width:173px;text-align:center">Ursachen</div>
<div class="ct" style="left:634px;top:88px;font-weight:bold;letter-spacing:-0.6px;color:#1a1a1a;width:173px;text-align:center">Bestehende bzw.<br>vorgesehene<br>Prüfmaßnahmen &amp;<br>Vorkehrungen</div>
<div class="ct" style="left:807px;top:73px;font-weight:bold;letter-spacing:-0.6px;color:#1a1a1a;width:115px;text-align:center">Bewertung</div>
<div class="ct" style="left:811px;top:166px;transform:rotate(-90deg);transform-origin:0 0;font-weight:bold;letter-spacing:-0.6px;color:#1a1a1a">Bedeutung</div>
<div class="ct" style="left:837px;top:166px;transform:rotate(-90deg);transform-origin:0 0;font-weight:bold;letter-spacing:-0.6px;color:#1a1a1a">Auftreten</div>
<div class="ct" style="left:863px;top:166px;transform:rotate(-90deg);transform-origin:0 0;font-weight:bold;letter-spacing:-0.6px;color:#1a1a1a">Entdeckung</div>
<div class="ct" style="left:886px;top:166px;transform:rotate(-90deg);transform-origin:0 0;font-weight:bold;letter-spacing:-0.6px;color:#1a1a1a">Kategori-<br>sierung</div>
<div class="ct" style="left:923px;top:166px;transform:rotate(-90deg);transform-origin:0 0;font-weight:bold;letter-spacing:-0.6px;color:#1a1a1a">Referenz zur<br>Maßnahme</div>
<div class="ct" style="left:1178px;top:6px;font-size:15px;line-height:17px;font-weight:bold;letter-spacing:0;color:#111">Bedeutung</div>
<div class="ct" style="left:1207px;top:71px;font-size:15px;line-height:17px;letter-spacing:-0.3px;color:#222">Eher unkritisch</div>
<div class="ct" style="left:1220px;top:92px;font-size:15px;line-height:17px;letter-spacing:-0.3px;color:#222">Eher unkritisch</div>
<div style="left:0px;top:169px;width:959px;height:536px;background:#e7e7e7"></div>
<div style="left:1175px;top:169px;width:63px;height:106px;background:#90e490"></div>
<div style="left:1175px;top:274px;width:63px;height:128px;background:#e8e80c"></div>
<div style="left:1175px;top:402px;width:63px;height:119px;background:#e60c0c"></div>
<div class="ct" style="left:1178px;top:242px;font-size:13.5px;line-height:16px;letter-spacing:-0.2px;color:#143014">Vernachlässigbares<br>Risiko</div>
<div class="ct" style="left:1178px;top:386px;font-size:13.5px;line-height:16px;letter-spacing:-0.2px;color:#222">Akzeptables</div>
<div class="ct" style="left:1178px;top:505px;font-size:13.5px;line-height:16px;letter-spacing:-0.2px;color:#5a1010">Risiko</div>
<div style="left:0px;top:168px;width:959px;height:1px;background-image:linear-gradient(90deg,#000 50%,transparent 50%);background-size:2px 1px"></div>
<div style="left:0px;top:640px;width:959px;height:1px;background-image:linear-gradient(90deg,#000 50%,transparent 50%);background-size:2px 1px"></div>
<div style="left:422px;top:274px;width:537px;height:1px;background-image:linear-gradient(90deg,#000 50%,transparent 50%);background-size:2px 1px"></div>
<div style="left:422px;top:402px;width:537px;height:1px;background-image:linear-gradient(90deg,#000 50%,transparent 50%);background-size:2px 1px"></div>
<div style="left:422px;top:521px;width:537px;height:1px;background-image:linear-gradient(90deg,#000 50%,transparent 50%);background-size:2px 1px"></div>
<div style="left:29px;top:168px;width:1px;height:538px;background-image:linear-gradient(180deg,#000 50%,transparent 50%);background-size:1px 2px"></div>
<div style="left:160px;top:168px;width:1px;height:538px;background-image:linear-gradient(180deg,#000 50%,transparent 50%);background-size:1px 2px"></div>
<div style="left:291px;top:168px;width:1px;height:538px;background-image:linear-gradient(180deg,#000 50%,transparent 50%);background-size:1px 2px"></div>
<div style="left:422px;top:168px;width:1px;height:538px;background-image:linear-gradient(180deg,#000 50%,transparent 50%);background-size:1px 2px"></div>
<div style="left:460px;top:168px;width:1px;height:538px;background-image:linear-gradient(180deg,#000 50%,transparent 50%);background-size:1px 2px"></div>
<div style="left:633px;top:168px;width:1px;height:538px;background-image:linear-gradient(180deg,#000 50%,transparent 50%);background-size:1px 2px"></div>
<div style="left:806px;top:168px;width:1px;height:538px;background-image:linear-gradient(180deg,#000 50%,transparent 50%);background-size:1px 2px"></div>
<div style="left:832px;top:168px;width:1px;height:538px;background-image:linear-gradient(180deg,#000 50%,transparent 50%);background-size:1px 2px"></div>
<div style="left:858px;top:168px;width:1px;height:538px;background-image:linear-gradient(180deg,#000 50%,transparent 50%);background-size:1px 2px"></div>
<div style="left:884px;top:168px;width:1px;height:538px;background-image:linear-gradient(180deg,#000 50%,transparent 50%);background-size:1px 2px"></div>
<div style="left:921px;top:168px;width:1px;height:538px;background-image:linear-gradient(180deg,#000 50%,transparent 50%);background-size:1px 2px"></div>
<div style="left:958px;top:168px;width:1px;height:538px;background-image:linear-gradient(180deg,#000 50%,transparent 50%);background-size:1px 2px"></div>
<div class="ct" style="left:0px;top:169px;font-weight:bold;letter-spacing:-0.6px;color:#1a1a1a;width:30px;text-align:center">B1</div>
<div class="ct" style="left:32px;top:169px;color:#1a1a1a">Fehlerhafte<br>Vereinzelung der<br>Faltschachtel</div>
<div class="ct" style="left:163px;top:169px;color:#1a1a1a">• Betriebstörung da<br>mehrere Schachteln<br>den Transportweg<br>oder die Aufrichtstation<br>blockieren</div>
<div class="ct" style="left:294px;top:169px;color:#b43038;font-style:italic;letter-spacing:-0.25px"><b style='letter-spacing:-0.3px'>Eher unkritisch</b><br>da Blockaden über<br>Sensoren erkannt<br>werden und Störungen<br>zu einem<br>Anlagenstopp führen</div>
<div class="ct" style="left:423px;top:169px;font-weight:bold;letter-spacing:-0.6px;color:#1a1a1a;width:38px;text-align:center">B1.1</div>
<div class="ct" style="left:423px;top:275px;font-weight:bold;letter-spacing:-0.6px;color:#1a1a1a;width:38px;text-align:center">B1.2</div>
<div class="ct" style="left:423px;top:403px;font-weight:bold;letter-spacing:-0.6px;color:#1a1a1a;width:38px;text-align:center">B1.3</div>
<div class="ct" style="left:423px;top:522px;font-weight:bold;letter-spacing:-0.6px;color:#1a1a1a;width:38px;text-align:center">B1.4</div>
<div class="ct" style="left:423px;top:641px;font-weight:bold;letter-spacing:-0.6px;color:#1a1a1a;width:38px;text-align:center">B2.1</div>
<div class="ct" style="left:463px;top:169px;color:#1a1a1a">Mechanik zur Vereinzelung der<br>Schachteln funktioniert nicht</div>
<div class="ct" style="left:463px;top:275px;color:#1a1a1a">Parametrierung für die<br>Vereinzelung nicht geeignet</div>
<div class="ct" style="left:463px;top:403px;color:#1a1a1a">Nachführung von Schachteln<br>aus dem Magazin nicht<br>gleichmäßig</div>
<div class="ct" style="left:463px;top:641px;color:#1a1a1a">Hinterlegte Schrittkette für<br>Aktuatoren nicht geeignet</div>
<div class="ct" style="left:636px;top:169px;color:#b43038;font-style:italic;letter-spacing:-0.25px">Funktionsqualifizierung :<br>• Überprüfung der<br>Vereinzelung</div>
<div class="ct" style="left:636px;top:275px;color:#b43038;font-style:italic;letter-spacing:-0.25px">Installationsqualifizierung :<br>• Überprüfung der<br>Parametrierung<br><br>Funktionsqualifizierung :<br>• Überprüfung der<br>Vereinzelungsfunktion</div>
<div class="ct" style="left:636px;top:403px;color:#b43038;font-style:italic;letter-spacing:-0.25px">Prüfung der Zuverlässigkeit in<br>der PQ</div>
<div class="ct" style="left:636px;top:641px;color:#b43038;font-style:italic;letter-spacing:-0.25px">Funktionsqualifizierung :<br>• Prüfung der Funktion</div>
<div class="ct" style="left:0px;top:641px;font-weight:bold;letter-spacing:-0.6px;color:#1a1a1a;width:30px;text-align:center">B2</div>
<div class="ct" style="left:32px;top:641px;color:#1a1a1a">Fehlerhafte Zuführung<br>der Faltschachtel</div>
<div class="ct" style="left:163px;top:641px;color:#1a1a1a">• Faltschachtel kann<br>nicht aufgerichtet<br>werden, lückenhafte<br>Bereitstellung von</div>
<div class="ct" style="left:294px;top:641px;color:#b43038;font-style:italic;letter-spacing:-0.25px"><b style='letter-spacing:-0.3px'>Eher unkritisch</b><br>da Lücken in der<br>Bereitstellung über<br>Sensoren erkannt</div>
<div class="ct" style="left:961px;top:170px;font-size:12px;line-height:17px;letter-spacing:0;color:#222"><b>Hinweis:</b> Die vorliegende Einstufung<br>der Bewertungskriterien (Bedeutung<br>und Auftreten) ist beispielhaft und<br>muss an Ihre konkreten Bedürfnisse<br>angepasst werden. Das beinhaltet<br>auch die Definition der Kriterien, wie<br>z.B. häufiges Auftreten bedeutet X mal<br>in 100.</div>
<div style="left:805px;top:639px;width:29px;height:80px;border:3px solid #000"></div>
<div style="left:806px;top:641px;width:1px;height:70px;background-image:linear-gradient(180deg,#fff 50%,transparent 50%);background-size:1px 2px"></div>
<div style="left:832px;top:641px;width:1px;height:70px;background-image:linear-gradient(180deg,#fff 50%,transparent 50%);background-size:1px 2px"></div>
<div style="left:807px;top:640px;width:25px;height:1px;background-image:linear-gradient(90deg,#fff 50%,transparent 50%);background-size:2px 1px"></div>
</div>
<div style="left:1264px;top:223px;width:16px;height:762px;background:linear-gradient(90deg,#d3d8de,#dfe3e8 50%,#d3d8de)"></div>
<div style="left:1265px;top:224px;width:14px;height:8px;background:#f2f2f2;border:1px solid #a0a6ac"><div style="left:2px;top:3px;width:8px;height:1px;background:#666"></div></div>
<svg style="position:absolute;left:1266px;top:234px" width="12" height="10"><path d="M2 8 L6 3 L10 8z" fill="#4a5058"/></svg>
<div style="left:1265px;top:248px;width:14px;height:72px;background:linear-gradient(90deg,#dde1e6,#eceef1 50%,#dadee3);border:1px solid #8c929a;border-radius:2px"><div style="left:3px;top:34px;width:7px;height:1px;background:#555;box-shadow:0 2px 0 #555,0 4px 0 #555"></div></div>
<svg style="position:absolute;left:1266px;top:972px" width="12" height="10"><path d="M2 2 L6 7 L10 2z" fill="#4a5058"/></svg>
<div style="left:0px;top:985px;width:1280px;height:16px;background:linear-gradient(#d6dbe2,#cdd3da)"></div>
<div style="left:0px;top:985px;width:1280px;height:1px;background:#a0a6ad"></div>
<svg style="position:absolute;left:4px;top:988px" width="56" height="12">
<path d="M3 2 V10" stroke="#333" stroke-width="1.5"/><path d="M10 2 L5 6 L10 10z" fill="#333"/>
<path d="M25 2 L20 6 L25 10z" fill="#333"/>
<path d="M34 2 L39 6 L34 10z" fill="#333"/>
<path d="M47 2 L52 6 L47 10z" fill="#333"/><path d="M53 2 V10" stroke="#333" stroke-width="1.5"/>
</svg>
<div style="left:61px;top:986px;width:1px;height:15px;background:#9aa0a8"></div>
<svg style="position:absolute;left:62px;top:986px" width="90" height="16"><path d="M0.5 0.5 L88.5 0.5 L74.5 14.5 L0.5 14.5" fill="#c4ecc4" stroke="#8e949c"/></svg>
<div class="t" style="left:62px;top:986px;width:84px;text-align:center;font-size:12.5px;line-height:15px;font-weight:normal;color:#1e3a1e">Übersicht</div>
<svg style="position:absolute;left:136px;top:986px" width="107" height="16"><path d="M14.5 0.5 L105.5 0.5 L105.5 14.5 L0.5 14.5" fill="#dce0e6" stroke="#8e949c"/></svg>
<div class="t" style="left:148px;top:986px;width:90px;text-align:center;font-size:12.5px;line-height:15px;font-weight:normal;color:#50565e">A-Ausrüstung</div>
<svg style="position:absolute;left:322px;top:986px" width="87" height="16"><path d="M12.5 0.5 L85.5 0.5 L74.5 14.5 L0.5 14.5" fill="#dce0e6" stroke="#8e949c"/></svg>
<div class="t" style="left:327px;top:986px;width:70px;text-align:center;font-size:12.5px;line-height:15px;font-weight:normal;color:#50565e">C-Betrieb</div>
<svg style="position:absolute;left:396px;top:986px" width="140" height="16"><path d="M11.5 0.5 L138.5 0.5 L124.5 14.5 L0.5 14.5" fill="#dce0e6" stroke="#8e949c"/></svg>
<div class="t" style="left:403px;top:986px;width:120px;text-align:center;font-size:12.5px;line-height:15px;font-weight:normal;color:#50565e">D-Dokumentation</div>
<svg style="position:absolute;left:520px;top:986px" width="127" height="16"><path d="M14.5 0.5 L125.5 0.5 L114.5 14.5 L0.5 14.5" fill="#c8ecc8" stroke="#8e949c"/></svg>
<div class="t" style="left:526px;top:986px;width:108px;text-align:center;font-size:12.5px;line-height:15px;font-weight:normal;color:#1e3a1e">Nachbewertung</div>
<svg style="position:absolute;left:634px;top:986px" width="48" height="16"><path d="M11.5 0.5 L46.5 0.5 L33.5 14.5 L0.5 14.5" fill="#dce0e6" stroke="#8e949c"/></svg>
<svg style="position:absolute;left:241px;top:984px" width="95" height="18"><path d="M0.5 0.5 L93.5 0.5 L81.5 16.5 L0.5 16.5" fill="#e8e8e8" stroke="#9aa0a8"/></svg>
<div style="left:242px;top:984px;width:91px;height:2px;background:#e8e8e8"></div>
<div class="t" style="left:242px;top:986px;width:86px;text-align:center;font-size:12.5px;line-height:15px;font-weight:bold;color:#30363e">B-Funktion</div>
<svg style="position:absolute;left:646px;top:986px" width="18" height="14"><rect x="4" y="3" width="11" height="9" rx="1" fill="#dde6f4" stroke="#5a7aa8"/><path d="M3 1 l2 3 M1 4 l3 0 M6 0 l-1 3" stroke="#e0a020" stroke-width="1.5"/></svg>
<div style="left:898px;top:986px;width:366px;height:15px;background:linear-gradient(#dfe3e8,#d2d7dd)"></div>
<div style="left:900px;top:988px;width:7px;height:12px;background:#f2f2f2;border:1px solid #8a9098"><div style="left:2px;top:2px;width:1px;height:6px;background:#666"></div></div>
<svg style="position:absolute;left:910px;top:988px" width="10" height="12"><path d="M8 2 L3 6 L8 10z" fill="#4a5058"/></svg>
<div style="left:925px;top:986px;width:225px;height:15px;background:linear-gradient(#f6f7f8,#e6e9ec);border:1px solid #9aa0a8;border-radius:2px"><div style="left:110px;top:4px;width:1px;height:6px;background:#555;box-shadow:2px 0 0 #555,4px 0 0 #555,6px 0 0 #555"></div></div>
<svg style="position:absolute;left:1241px;top:988px" width="10" height="12"><path d="M2 2 L7 6 L2 10z" fill="#4a5058"/></svg>
<div style="left:1256px;top:988px;width:7px;height:12px;background:#f2f2f2;border:1px solid #8a9098"><div style="left:2px;top:2px;width:1px;height:6px;background:#666"></div></div>
<div style="left:1264px;top:985px;width:16px;height:16px;background:#d5dae0"></div>
<div style="left:0px;top:1001px;width:1280px;height:23px;background:linear-gradient(#e2e5e9,#cfd3d8 50%,#c4c9cf)"></div>
<div style="left:0px;top:1001px;width:1280px;height:1px;background:#a9aeb4"></div>
<div class="t" style="left:8px;top:1005px;font-size:12px;line-height:15px;color:#333">Bereit</div>
<div style="left:47px;top:1003px;width:1px;height:20px;background:#a8adb3;box-shadow:1px 0 0 #eef0f2"></div>
<div style="left:1036px;top:1003px;width:1px;height:20px;background:#a8adb3;box-shadow:1px 0 0 #eef0f2"></div>
<div style="left:1041px;top:1003px;width:18px;height:18px;background:linear-gradient(#fce8a8,#f4cc60);border:1px solid #d0a440;border-radius:2px"><svg style="position:absolute;left:2px;top:3px" width="13" height="11"><rect x="0.5" y="0.5" width="12" height="10" fill="#fafafa" stroke="#3a6a3a"/><path d="M0.5 3.5 H12.5 M0.5 6.5 H12.5 M4.5 0.5 V10.5 M8.5 0.5 V10.5" stroke="#3a6a3a"/></svg></div>
<svg style="position:absolute;left:1062px;top:1005px" width="14" height="14"><rect x="0.5" y="0.5" width="13" height="13" fill="#e8e8e8" stroke="#555"/><rect x="3.5" y="3.5" width="7" height="7" fill="#fafafa" stroke="#555"/></svg>
<svg style="position:absolute;left:1080px;top:1005px" width="15" height="14"><rect x="0.5" y="0.5" width="14" height="13" fill="#e8e8e8" stroke="#555"/><path d="M4.5 0.5 V8.5 M9.5 0.5 V8.5 M0.5 8.5 H14.5" stroke="#555"/><rect x="1" y="1" width="3" height="7" fill="#fff"/></svg>
<div class="t" style="left:1105px;top:1005px;font-size:12.5px;line-height:15px;color:#333">100 %</div>
<svg style="position:absolute;left:1144px;top:1004px" width="136" height="18"><circle cx="7.5" cy="8.5" r="7.5" fill="#f4f4f4" stroke="#8a9098"/><path d="M3.5 8.5 H11.5" stroke="#333" stroke-width="2"/><path d="M17 8.5 H76" stroke="#9aa0a8"/><path d="M62 2.5 H70 V11 L66 15 L62 11z" fill="#f6f6f6" stroke="#707880"/><circle cx="123.5" cy="8.5" r="7.5" fill="#f4f4f4" stroke="#8a9098"/><path d="M119.5 8.5 H127.5 M123.5 4.5 V12.5" stroke="#333" stroke-width="2"/><path d="M70 8.5 H116" stroke="#9aa0a8"/></svg>
</body></html>
